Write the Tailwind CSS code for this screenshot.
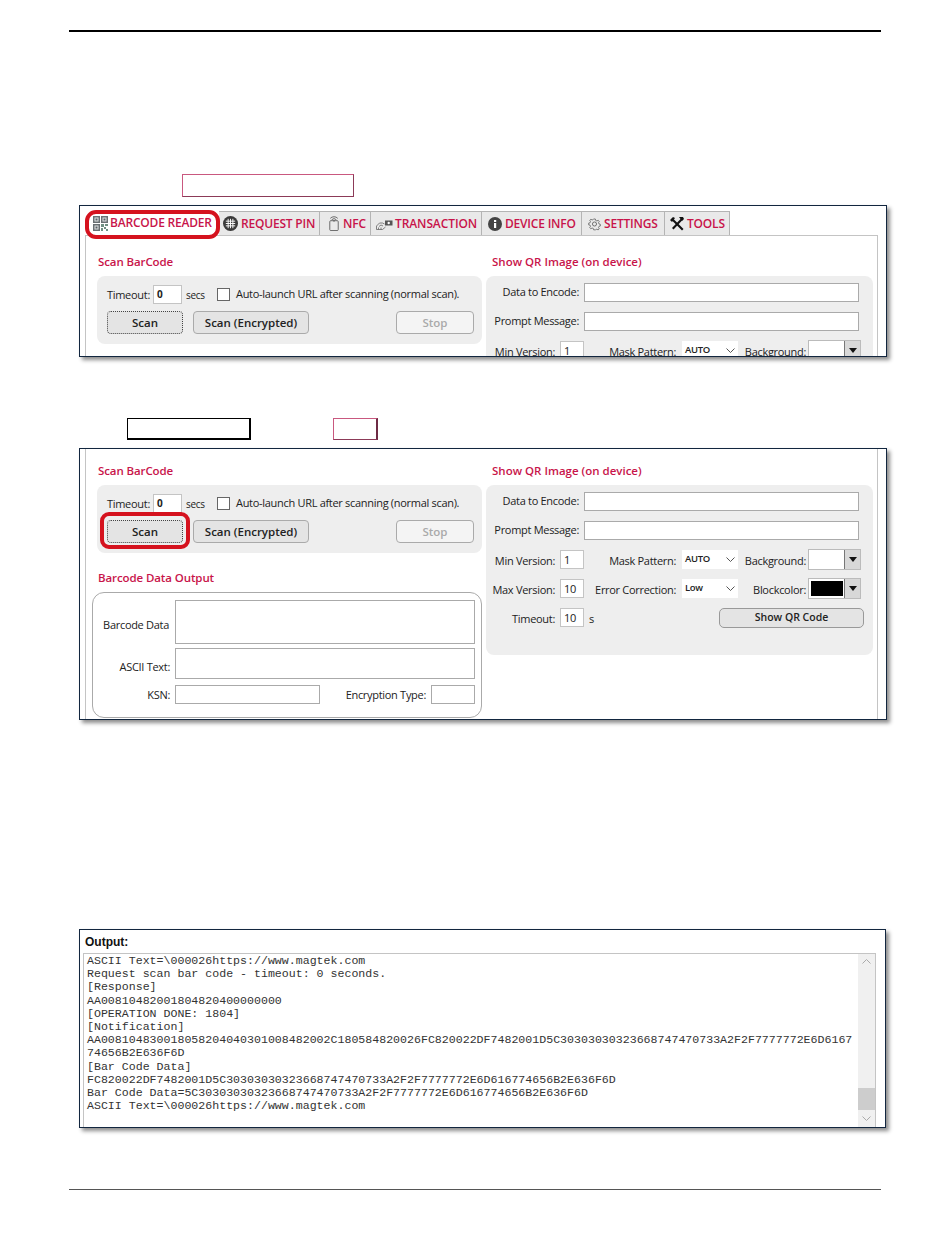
<!DOCTYPE html>
<html lang="en">
<head>
  <meta charset="UTF-8" />
  <title>Barcode Reader</title>
  <script src="https://cdn.jsdelivr.net/npm/@tailwindcss/browser@4"></script>
</head>
<body class="bg-white">
<div class="relative w-[950px] h-[1260px] overflow-hidden flex flex-col font-['Open_Sans',sans-serif] text-[11px] tracking-[-0.3px] text-[#222]">

  <div class="mt-[30px] mx-[69px] h-[2px] bg-black"></div>

  <!-- callout boxes -->
  <div class="mt-[142px] ml-[182px] w-[172px] h-[23px] border border-[#c9587f] border-r-[#8c3a58] border-b-[#8c3a58]"></div>

  <!-- first window: tabs -->
  <div class="mt-[8px] ml-[79px] w-[808px] h-[152px] shrink-0 border border-[#12263f] bg-white shadow-[3px_3px_4px_rgba(0,0,0,0.45)] overflow-hidden">
    <div class="flex ml-[6px] mt-[5px] h-[24px] text-[12px] font-semibold text-[#c8144a] tracking-[-0.2px]">
      <div class="w-[133px] flex items-center bg-white">
        <svg class="ml-[7px] w-[15px] h-[15px]" viewBox="0 0 15 15">
          <path fill="#6a7074" d="M0 0h7v7H0zM8 0h7v7H8zM0 8h7v7H0z"/>
          <path fill="#dfe3e3" d="M1.500 1.500h4v4h-4zM9.500 1.500h4v4h-4zM1.500 9.500h4v4h-4z"/>
          <path fill="#5c6268" d="M2.500 2.500h2v2h-2zM10.500 2.500h2v2h-2zM2.500 10.500h2v2h-2z"/>
          <path fill="#6f8f83" d="M8 8h3v3H8zM12 8h3v2h-3zM11 11h2v2h-2zM13 13h2v2h-2zM8 12h2v3H8z"/>
        </svg>
        <span class="ml-[2px]">BARCODE READER</span>
      </div>
      <div class="w-[101px] flex items-center bg-[#e9e9e9] border-t border-r border-[#b4b4b4]">
        <svg class="ml-[4px] w-[15px] h-[15px]" viewBox="0 0 16 16">
          <circle cx="8" cy="8" r="8" fill="#3a3a3a"/>
          <path stroke="#fff" stroke-width="1" d="M3 5.500h10M3 8h10M3 10.500h10M5.500 3v10M8 3v10M10.500 3v10"/>
        </svg>
        <span class="ml-[3px]">REQUEST PIN</span>
      </div>
      <div class="w-[51px] flex items-center bg-[#e9e9e9] border-t border-r border-[#b4b4b4]">
        <svg class="ml-[8px] w-[12px] h-[15px]" viewBox="0 0 12 16" fill="none" stroke="#555" stroke-width="0.9">
          <rect x="1.500" y="5" width="9" height="10.500" rx="1"/>
          <path d="M3.500 4a3.500 3.500 0 0 1 5 0M2 2.500a5.500 5.500 0 0 1 8 0M5 5.500a1.500 1.500 0 0 1 2 0"/>
        </svg>
        <span class="ml-[3px]">NFC</span>
      </div>
      <div class="w-[111px] flex items-center bg-[#e9e9e9] border-t border-r border-[#b4b4b4]">
        <svg class="ml-[5px] w-[17px] h-[10px] mt-[3px]" viewBox="0 0 17 10" fill="none" stroke="#666" stroke-width="0.8">
          <path d="M.5 9.500V6l3-3h3l2 1M.5 9.500h6l3-2.500"/>
          <path d="M3 6.500l2-1.500 2 1M2.500 9.500V7.500M5 9.500V7.500"/>
          <rect x="9" y="0.500" width="7.500" height="5" fill="#555" stroke="none"/>
          <circle cx="12.700" cy="3" r="1.200" fill="#fff" stroke="none"/>
        </svg>
        <span class="ml-[2px] tracking-[-0.1px]">TRANSACTION</span>
      </div>
      <div class="w-[100px] flex items-center bg-[#e9e9e9] border-t border-r border-[#b4b4b4]">
        <svg class="ml-[6px] w-[14px] h-[14px]" viewBox="0 0 14 14">
          <circle cx="7" cy="7" r="7" fill="#444"/>
          <rect x="6" y="6" width="2.200" height="5" fill="#fff"/>
          <rect x="6" y="3" width="2.200" height="2" fill="#fff"/>
        </svg>
        <span class="ml-[3px]">DEVICE INFO</span>
      </div>
      <div class="w-[83px] flex items-center bg-[#e9e9e9] border-t border-r border-[#b4b4b4]">
        <svg class="ml-[6px] w-[13px] h-[14px]" viewBox="0 0 14 14" fill="none" stroke="#666" stroke-width="1">
          <circle cx="7" cy="7" r="2.200"/>
          <path d="M6 1h2l.4 1.700 1.500.7 1.500-.9 1.300 1.400-.9 1.500.6 1.500 1.600.5v2l-1.600.4-.6 1.500.9 1.500-1.400 1.300-1.500-.9-1.400.6L8 14H6l-.4-1.600-1.500-.6-1.500.9-1.300-1.400.9-1.500-.6-1.500L0 8V6l1.600-.4.600-1.500-.9-1.500 1.400-1.300 1.500.9 1.400-.7z" transform="translate(.7 .7) scale(.9)"/>
        </svg>
        <span class="ml-[3px]">SETTINGS</span>
      </div>
      <div class="w-[65px] flex items-center bg-[#e9e9e9] border-t border-r border-[#b4b4b4]">
        <svg class="ml-[5px] w-[14px] h-[14px]" viewBox="0 0 14 14" fill="#111">
          <path d="M2.500 1l11 11-1.500 1.500L1 2.500z"/>
          <path d="M11.500 1l-9.500 10 1.500 1.500 9.500-10z"/>
          <path d="M0 3l3-3 2 1-3 4zM9 0h4l1 2-2 2z"/>
        </svg>
        <span class="ml-[3px]">TOOLS</span>
      </div>
    </div>
    <div class="ml-[5px] mr-[8px] h-[200px] border-x border-t border-[#c4c4c4] flex">
      <div class="w-[11px] shrink-0"></div>
      <div class="w-[385px] shrink-0">
        <div class="mt-[16px] mb-[4px] h-[20px] pl-px flex items-center text-[11.5px] font-semibold tracking-[-0.1px] text-[#c8144a]">Scan BarCode</div>
        <div class="h-[68px] bg-[#eeeeee] rounded-[8px] pt-[9px] pl-[10px]">
          <div class="flex items-center h-[19px]">
            <span class="w-[44px] mt-[2px]">Timeout:</span>
            <div class="ml-[2px] w-[29px] h-[19px] bg-white border border-[#c4c4c4] pl-[3px] text-[10px] font-bold leading-[17px]">0</div>
            <span class="ml-[4px] w-[31px] mt-[2px] text-[10px]">secs</span>
            <div class="w-[13px] h-[13px] bg-white border border-[#666]"></div>
            <span class="ml-[6px] whitespace-nowrap">Auto-launch URL after scanning (normal scan).</span>
          </div>
          <div class="flex mt-[7px]">
            <div class="w-[76px] h-[23px] bg-[#e4e4e4] border border-dotted border-[#444] rounded-[4px] flex items-center justify-center text-[11.5px] font-semibold tracking-normal">Scan</div>
            <div class="ml-[10px] w-[116px] h-[23px] bg-[#e4e4e4] border border-[#aaa] rounded-[4px] flex items-center justify-center text-[11.5px] font-semibold tracking-normal">Scan (Encrypted)</div>
            <div class="ml-[87px] w-[78px] h-[23px] bg-[#f4f4f4] border border-[#aaa] rounded-[4px] flex items-center justify-center text-[11.5px] font-semibold tracking-normal text-[#aaa]">Stop</div>
          </div>
        </div>
      </div>
      <div class="ml-[4px] w-[387px] shrink-0">
        <div class="mt-[16px] mb-[4px] h-[20px] flex items-center pl-[6px] text-[11.5px] font-semibold tracking-normal text-[#c8144a]">Show QR Image (on device)</div>
        <div class="h-[170px] bg-[#eeeeee] rounded-[8px] pt-[7px]">
          <div class="flex items-center">
            <span class="w-[93px] text-right">Data to Encode:</span>
            <div class="ml-[5px] w-[275px] h-[19px] bg-white border border-[#aaa]"></div>
          </div>
          <div class="flex items-center mt-[10px]">
            <span class="w-[93px] text-right">Prompt Message:</span>
            <div class="ml-[5px] w-[275px] h-[19px] bg-white border border-[#aaa]"></div>
          </div>
          <div class="flex items-center mt-[10px] h-[19px]">
            <span class="w-[69px] mt-[3px] text-right whitespace-nowrap">Min Version:</span>
            <div class="ml-[5px] w-[24px] h-[19px] bg-white border border-[#c4c4c4] pl-[3px] leading-[17px]">1</div>
            <span class="w-[92px] mt-[3px] text-right whitespace-nowrap">Mask Pattern:</span>
            <div class="ml-[6px] w-[56px] h-[19px] bg-white flex items-center justify-between px-[3px] text-[9.5px] font-semibold">AUTO
              <svg class="w-[9px] h-[6px]" viewBox="0 0 9 6" fill="none" stroke="#555"><path d="M.5 .5l4 4 4-4"/></svg>
            </div>
            <span class="w-[68px] mt-[3px] text-right whitespace-nowrap">Background:</span>
            <div class="ml-[2px] w-[53px] h-[21px] flex border border-[#bbb]">
              <div class="w-[35px] bg-white"></div>
              <div class="flex-1 bg-[#d8d8d8] border-l border-[#777] flex items-center justify-center">
                <svg class="w-[8px] h-[5px]" viewBox="0 0 8 5"><path d="M0 0h8L4 5z" fill="#111"/></svg>
              </div>
            </div>
          </div>
        </div>
      </div>
    </div>
  </div>

  <div class="mt-[61px] flex h-[22px] shrink-0">
    <div class="ml-[127px] w-[124px] border border-black border-r-2 border-b-2"></div>
    <div class="ml-[82px] w-[45px] border border-[#c9587f] border-r-[#6e2b45] border-b-[#8c3a58] border-r-2"></div>
  </div>

  <!-- second window: scan + QR -->
  <div class="mt-[8px] ml-[79px] w-[808px] h-[272px] shrink-0 border border-[#12263f] bg-white shadow-[3px_3px_4px_rgba(0,0,0,0.45)] overflow-hidden">
    <div class="ml-[5px] mr-[8px] h-[270px] border-x border-[#c4c4c4] flex">
      <div class="w-[11px] shrink-0"></div>
      <div class="w-[385px] shrink-0">
        <div class="mt-[12px] mb-[4px] h-[20px] pl-px flex items-center text-[11.5px] font-semibold tracking-[-0.1px] text-[#c8144a]">Scan BarCode</div>
        <div class="h-[68px] bg-[#eeeeee] rounded-[8px] pt-[9px] pl-[10px]">
          <div class="flex items-center h-[19px]">
            <span class="w-[44px] mt-[2px]">Timeout:</span>
            <div class="ml-[2px] w-[29px] h-[19px] bg-white border border-[#c4c4c4] pl-[3px] text-[10px] font-bold leading-[17px]">0</div>
            <span class="ml-[4px] w-[31px] mt-[2px] text-[10px]">secs</span>
            <div class="w-[13px] h-[13px] bg-white border border-[#666]"></div>
            <span class="ml-[6px] whitespace-nowrap">Auto-launch URL after scanning (normal scan).</span>
          </div>
          <div class="flex mt-[7px]">
            <div class="w-[76px] h-[23px] bg-[#e4e4e4] border border-dotted border-[#444] rounded-[4px] flex items-center justify-center text-[11.5px] font-semibold tracking-normal">Scan</div>
            <div class="ml-[10px] w-[116px] h-[23px] bg-[#e4e4e4] border border-[#aaa] rounded-[4px] flex items-center justify-center text-[11.5px] font-semibold tracking-normal">Scan (Encrypted)</div>
            <div class="ml-[87px] w-[78px] h-[23px] bg-[#f4f4f4] border border-[#aaa] rounded-[4px] flex items-center justify-center text-[11.5px] font-semibold tracking-normal text-[#aaa]">Stop</div>
          </div>
        </div>
        <div class="mt-[15px] mb-[4px] h-[20px] pl-px flex items-center text-[11.5px] font-semibold tracking-[-0.1px] text-[#c8144a]">Barcode Data Output</div>
        <div class="-ml-[5px] w-[390px] h-[126px] border border-[#aaa] rounded-[12px] pt-[7px]">
          <div class="flex items-center">
            <span class="w-[77px] mt-[6px] pr-[1px] text-right">Barcode Data</span>
            <div class="ml-[5px] w-[300px] h-[44px] bg-white border border-[#aaa]"></div>
          </div>
          <div class="flex items-center mt-[4px]">
            <span class="w-[77px] mt-[8px] text-right">ASCII Text:</span>
            <div class="ml-[5px] w-[300px] h-[31px] bg-white border border-[#aaa]"></div>
          </div>
          <div class="flex items-center mt-[6px]">
            <span class="w-[77px] mt-[2px] text-right">KSN:</span>
            <div class="ml-[5px] w-[145px] h-[19px] bg-white border border-[#aaa]"></div>
            <span class="w-[106px] mt-[2px] text-right">Encryption Type:</span>
            <div class="ml-[5px] w-[44px] h-[19px] bg-white border border-[#aaa]"></div>
          </div>
        </div>
      </div>
      <div class="ml-[4px] w-[387px] shrink-0">
        <div class="mt-[12px] mb-[4px] h-[20px] flex items-center pl-[6px] text-[11.5px] font-semibold tracking-normal text-[#c8144a]">Show QR Image (on device)</div>
        <div class="h-[170px] bg-[#eeeeee] rounded-[8px] pt-[7px] pr-[9px]">
          <div class="flex items-center">
            <span class="w-[93px] text-right">Data to Encode:</span>
            <div class="ml-[5px] w-[275px] h-[19px] bg-white border border-[#aaa]"></div>
          </div>
          <div class="flex items-center mt-[10px]">
            <span class="w-[93px] text-right">Prompt Message:</span>
            <div class="ml-[5px] w-[275px] h-[19px] bg-white border border-[#aaa]"></div>
          </div>
          <div class="flex items-center mt-[10px] h-[19px]">
            <span class="w-[69px] mt-[3px] text-right whitespace-nowrap">Min Version:</span>
            <div class="ml-[5px] w-[24px] h-[19px] bg-white border border-[#c4c4c4] pl-[3px] leading-[17px]">1</div>
            <span class="w-[92px] mt-[3px] text-right whitespace-nowrap">Mask Pattern:</span>
            <div class="ml-[6px] w-[56px] h-[19px] bg-white flex items-center justify-between px-[3px] text-[9.5px] font-semibold">AUTO
              <svg class="w-[9px] h-[6px]" viewBox="0 0 9 6" fill="none" stroke="#555"><path d="M.5 .5l4 4 4-4"/></svg>
            </div>
            <span class="w-[68px] mt-[3px] text-right whitespace-nowrap">Background:</span>
            <div class="ml-[2px] w-[53px] h-[21px] flex border border-[#bbb]">
              <div class="w-[35px] bg-white"></div>
              <div class="flex-1 bg-[#d8d8d8] border-l border-[#777] flex items-center justify-center">
                <svg class="w-[8px] h-[5px]" viewBox="0 0 8 5"><path d="M0 0h8L4 5z" fill="#111"/></svg>
              </div>
            </div>
          </div>
          <div class="flex items-center mt-[10px] h-[19px]">
            <span class="w-[69px] mt-[3px] text-right whitespace-nowrap">Max Version:</span>
            <div class="ml-[5px] w-[24px] h-[19px] bg-white border border-[#c4c4c4] pl-[3px] leading-[17px]">10</div>
            <span class="w-[92px] mt-[3px] text-right whitespace-nowrap">Error Correction:</span>
            <div class="ml-[6px] w-[56px] h-[19px] bg-white flex items-center justify-between px-[3px] text-[9.5px] font-semibold">Low
              <svg class="w-[9px] h-[6px]" viewBox="0 0 9 6" fill="none" stroke="#555"><path d="M.5 .5l4 4 4-4"/></svg>
            </div>
            <span class="w-[68px] mt-[3px] text-right whitespace-nowrap">Blockcolor:</span>
            <div class="ml-[2px] w-[53px] h-[21px] flex border border-[#bbb]">
              <div class="w-[35px] bg-white p-[2px] pr-[1px]"><div class="h-full bg-black"></div></div>
              <div class="flex-1 bg-[#d8d8d8] border-l border-[#777] flex items-center justify-center">
                <svg class="w-[8px] h-[5px]" viewBox="0 0 8 5"><path d="M0 0h8L4 5z" fill="#111"/></svg>
              </div>
            </div>
          </div>
          <div class="flex items-center mt-[10px] h-[19px]">
            <span class="w-[69px] mt-[3px] text-right">Timeout:</span>
            <div class="ml-[5px] w-[24px] h-[19px] bg-white border border-[#c4c4c4] pl-[3px] leading-[17px]">10</div>
            <span class="ml-[5px] mt-[3px]">s</span>
            <div class="ml-auto w-[145px] h-[20px] bg-[#e4e4e4] border border-[#999] rounded-[5px] flex items-center justify-center text-[10.5px] font-semibold tracking-normal">Show QR Code</div>
          </div>
        </div>
      </div>
    </div>
  </div>

  <!-- third window: output log -->
  <div class="mt-[209px] ml-[79px] w-[807px] h-[199px] shrink-0 border border-[#12263f] bg-white shadow-[3px_3px_4px_rgba(0,0,0,0.45)] overflow-hidden">
    <div class="h-[23px] pl-[5px] flex items-center font-['Liberation_Sans',sans-serif] text-[12px] font-bold tracking-normal text-[#111]">Output:</div>
    <div class="ml-[3px] w-[793px] h-[180px] border-x border-t border-[#c4c4c4] flex">
      <div class="flex-1 pl-[3px] font-['Liberation_Mono',monospace] text-[11.6px] tracking-normal leading-[13.2px] text-[#333] whitespace-pre overflow-hidden"><div>ASCII Text=\000026https://www.magtek.com</div><div>Request scan bar code - timeout: 0 seconds.</div><div>[Response]</div><div>AA00810482001804820400000000</div><div>[OPERATION DONE: 1804]</div><div>[Notification]</div><div>AA008104830018058204040301008482002C180584820026FC820022DF7482001D5C30303030323668747470733A2F2F7777772E6D6167</div><div>74656B2E636F6D</div><div>[Bar Code Data]</div><div>FC820022DF7482001D5C30303030323668747470733A2F2F7777772E6D616774656B2E636F6D</div><div>Bar Code Data=5C30303030323668747470733A2F2F7777772E6D616774656B2E636F6D</div><div>ASCII Text=\000026https://www.magtek.com</div></div>
      <div class="w-[17px] shrink-0 bg-[#f0f0f0] flex flex-col items-center">
        <svg class="mt-[5px] w-[9px] h-[5px]" viewBox="0 0 9 5" fill="none" stroke="#aaa"><path d="M.5 4.500l4-4 4 4"/></svg>
        <div class="mt-[124px] w-full h-[22px] bg-[#cdcdcd]"></div>
        <svg class="mt-[6px] w-[9px] h-[5px]" viewBox="0 0 9 5" fill="none" stroke="#aaa"><path d="M.5 .5l4 4 4-4"/></svg>
      </div>
    </div>
  </div>

  <div class="mt-[61px] mx-[69px] h-px bg-[#555]"></div>

  <!-- red highlight rings -->
  <div class="absolute left-[85px] top-[210px] w-[135px] h-[29px] border-[4px] border-[#d5121e] rounded-[11px]"></div>
  <div class="absolute left-[100px] top-[512px] w-[90px] h-[37px] border-[4px] border-[#d5121e] rounded-[9px]"></div>
</div>
</body>
</html>
